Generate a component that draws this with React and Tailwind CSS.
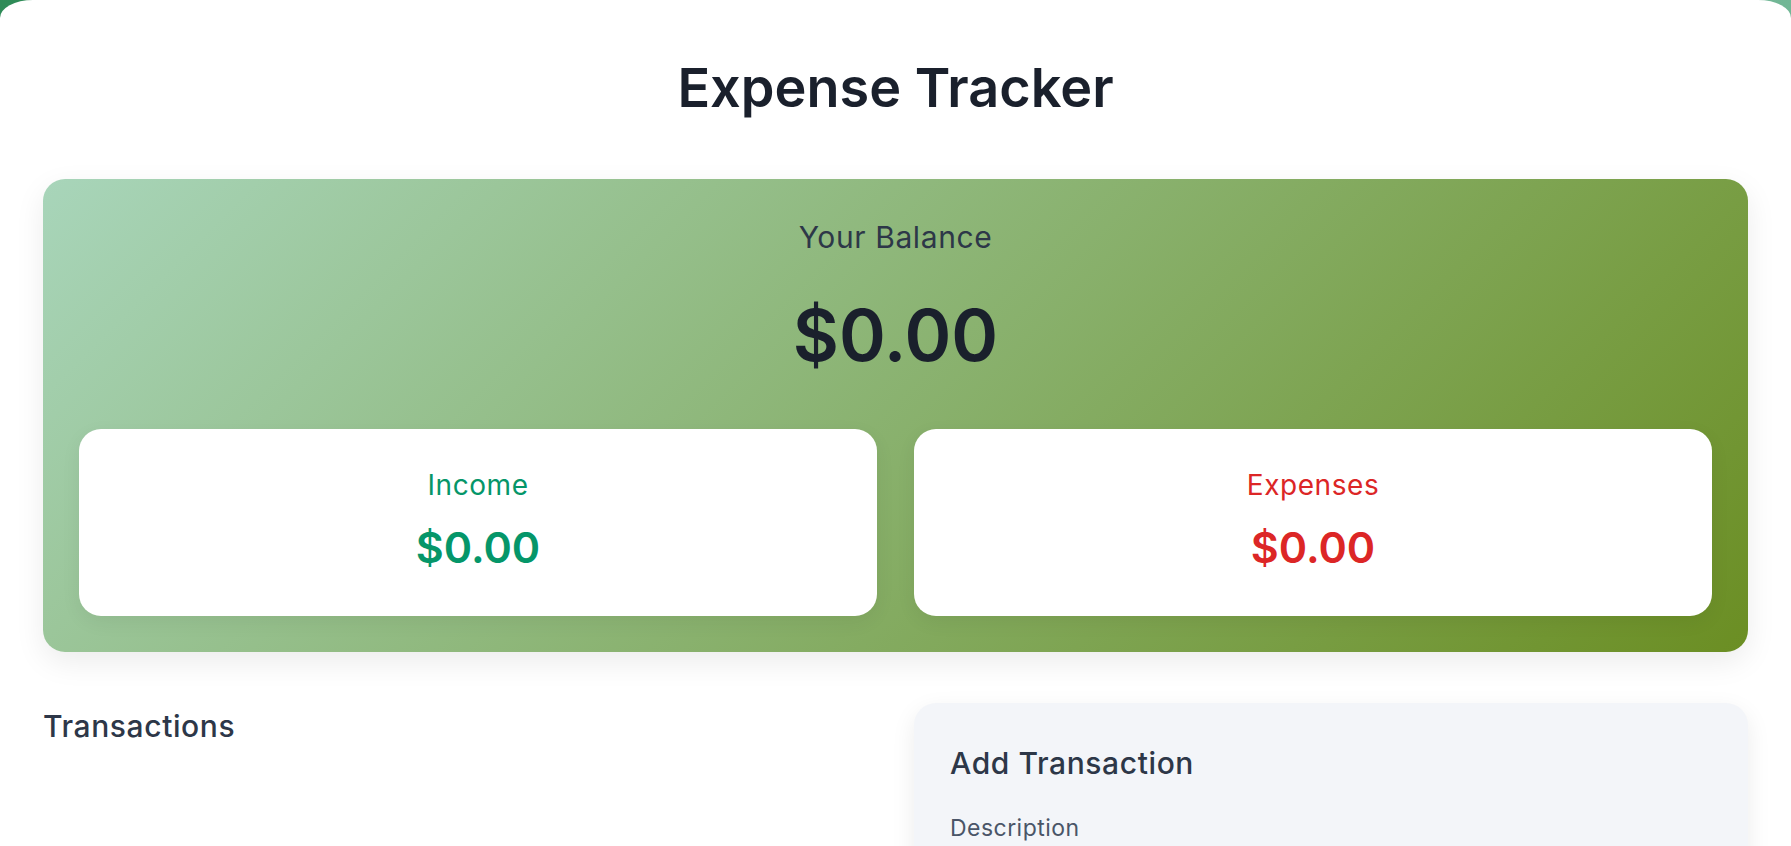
import React, { useState } from 'react';

const App = () => {
  const [text, setText] = useState('');
  const [amount, setAmount] = useState('');

  return (
    <div className="min-h-screen bg-gradient-to-r from-[#2e8b57] to-[#72b796] font-['Inter',sans-serif]">
      <div className="min-h-screen bg-white rounded-tl-[33px_18px] rounded-tr-[33px_18px] px-[43px] pb-16">
        {/* Title */}
        <h1 className="pt-[53px] text-center text-[54px] leading-[70px] font-semibold text-[#1a202c]">
          Expense Tracker
        </h1>

        {/* Balance card */}
        <div className="mt-[56px] rounded-[22px] bg-[linear-gradient(135deg,#a8d5ba,#6b8e23)] px-[36px] pt-[40px] pb-[36px] shadow-[0_10px_30px_rgba(0,0,0,0.08)]">
          <h2 className="text-center text-[30px] leading-[36px] text-[#2d3748] tracking-[0.02em]">
            Your Balance
          </h2>
          <div className="mt-[40px] text-center text-[71px] leading-[80px] font-semibold text-[#1a202c]">
            $0.00
          </div>

          <div className="mt-[54px] grid grid-cols-2 gap-[37px]">
            <div className="rounded-[22px] bg-white pt-[39px] pb-[44px] text-center shadow-[0_6px_20px_rgba(0,0,0,0.06)]">
              <h3 className="text-[28px] leading-[34px] text-[#059669] tracking-[0.02em]">Income</h3>
              <p className="mt-[20px] text-[43px] leading-[50px] font-semibold text-[#059669]">$0.00</p>
            </div>
            <div className="rounded-[22px] bg-white pt-[39px] pb-[44px] text-center shadow-[0_6px_20px_rgba(0,0,0,0.06)]">
              <h3 className="text-[28px] leading-[34px] text-[#dc2626] tracking-[0.02em]">Expenses</h3>
              <p className="mt-[20px] text-[43px] leading-[50px] font-semibold text-[#dc2626]">$0.00</p>
            </div>
          </div>
        </div>

        {/* Lower section */}
        <div className="mt-[51px] grid grid-cols-2 gap-[37px]">
          <div>
            <h2 className="text-[30px] leading-[46px] font-medium text-[#2d3748] tracking-[0.02em]">
              Transactions
            </h2>
          </div>

          <div className="rounded-[22px] bg-[#f3f5f9] px-[36px] pt-[42px] pb-[36px] shadow-[0_8px_24px_rgba(0,0,0,0.08)]">
            <h2 className="text-[30px] leading-[36px] font-medium text-[#2d3748] tracking-[0.02em]">
              Add Transaction
            </h2>
            <form className="mt-[33px] flex flex-col gap-5" onSubmit={(e) => e.preventDefault()}>
              <div>
                <label className="block text-[23px] leading-[28px] text-[#4a5568] tracking-[0.02em]">
                  Description
                </label>
                <input
                  value={text}
                  onChange={(e) => setText(e.target.value)}
                  className="mt-6 w-full rounded-xl border border-gray-300 bg-white px-4 py-3 text-lg"
                />
              </div>
              <div>
                <input
                  value={amount}
                  onChange={(e) => setAmount(e.target.value)}
                  className="w-full rounded-xl border border-gray-300 bg-white px-4 py-3 text-lg"
                />
              </div>
            </form>
          </div>
        </div>
      </div>
    </div>
  );
};

export default App;
